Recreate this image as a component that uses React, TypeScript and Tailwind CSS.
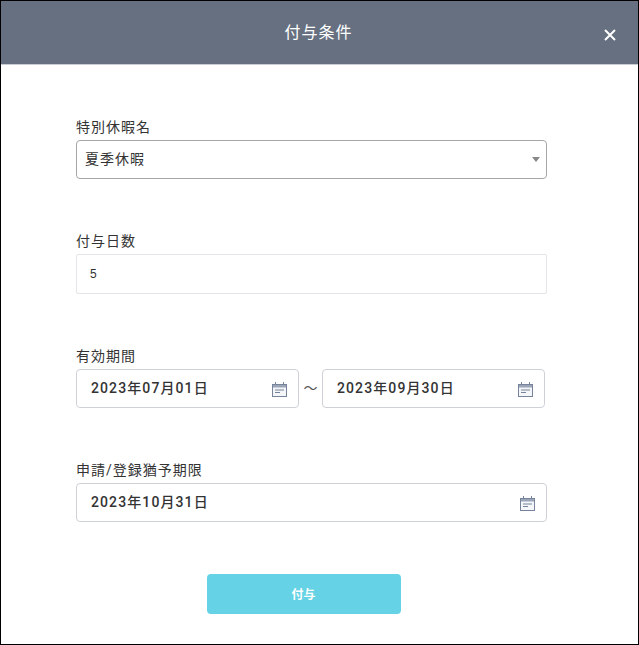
import type { ReactNode } from 'react';

const FONT = "font-['Roboto','Noto_Sans_CJK_JP',sans-serif]";

function CalendarIcon() {
  return (
    <svg width="15" height="15" viewBox="0 0 15 15" fill="none" className="shrink-0 mt-[2px]">
      <rect x="0.5" y="2.5" width="14" height="12" fill="#f4f6f9" stroke="#76839a" />
      <rect x="1" y="3" width="13" height="2.5" fill="#9aa5b8" />
      <path d="M3.5 0v3M11.5 0v3" stroke="#76839a" />
      <path d="M3 8h9" stroke="#76839a" />
      <path d="M3 10.5h5" stroke="#76839a" />
    </svg>
  );
}

function Field({ label, children }: { label: string; children: ReactNode }) {
  return (
    <div>
      <div className="text-[14px] leading-[20px] tracking-[1px] text-[#333] mb-[3px]">{label}</div>
      {children}
    </div>
  );
}

function DateBox({ value, className }: { value: string; className: string }) {
  return (
    <div className={`h-[39px] flex items-center justify-between pl-[14px] pr-[11px] border border-[#ced2d8] rounded-[4px] bg-white ${className}`}>
      <span className="text-[14px] leading-[20px] font-medium tracking-[1.1px] text-[#333] -mt-[2px]">{value}</span>
      <CalendarIcon />
    </div>
  );
}

export default function App() {
  return (
    <div className={`w-[639px] h-[645px] border border-black bg-white flex flex-col ${FONT}`}>
      <header className="h-[64px] shrink-0 bg-[#667080] border-b border-[#c9ced6] flex items-center justify-center relative">
        <h1 className="text-[16px] tracking-[1px] text-white pr-[2px]">付与条件</h1>
        <svg width="12" height="12" viewBox="0 0 12 12" className="absolute left-[603px] top-[28px]">
          <path d="M1 1l10 10M11 1L1 11" stroke="#fff" strokeWidth="2" />
        </svg>
      </header>

      <main className="pl-[75px] pt-[52px] flex flex-col gap-[52px]">
        <Field label="特別休暇名">
          <div className="w-[471px] h-[39px] flex items-center justify-between pl-[8px] pr-[6px] border border-[#a6a6a6] rounded-[4px]">
            <span className="text-[14px] tracking-[1px] text-[#333]">夏季休暇</span>
            <span className="w-0 h-0 border-x-[4px] border-x-transparent border-t-[5px] border-t-[#888]" />
          </div>
        </Field>

        <Field label="付与日数">
          <div className="w-[471px] h-[40px] flex items-center px-[13px] border border-[#e3e5e8] rounded-[2px] font-['Liberation_Sans',sans-serif] text-[12px] text-[#333]">
            5
          </div>
        </Field>

        <Field label="有効期間">
          <div className="flex items-center">
            <DateBox value="2023年07月01日" className="w-[223px]" />
            <span className="w-[23px] text-center text-[14px] text-[#555]">〜</span>
            <DateBox value="2023年09月30日" className="w-[223px]" />
          </div>
        </Field>

        <Field label="申請/登録猶予期限">
          <DateBox value="2023年10月31日" className="w-[471px]" />
        </Field>

        <div className="w-[455px] flex justify-center">
          <button className="w-[194px] h-[40px] pt-[2px] rounded-[4px] bg-[#65d3e5] text-white text-[12px] font-bold">付与</button>
        </div>
      </main>
    </div>
  );
}
